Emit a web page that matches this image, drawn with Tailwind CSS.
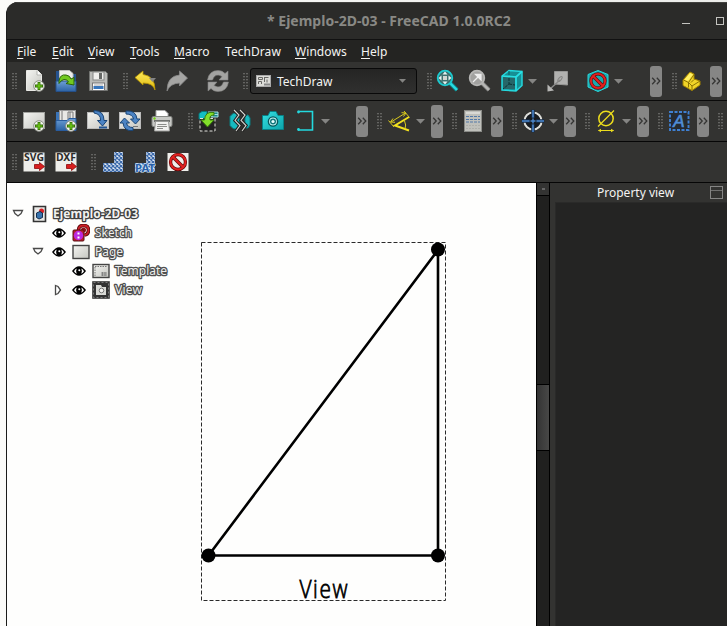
<!DOCTYPE html>
<html lang="en">
<head>
<meta charset="utf-8">
<title>Ejemplo-2D-03 - FreeCAD</title>
<script src="https://cdn.jsdelivr.net/npm/@tailwindcss/browser@4"></script>
</head>
<body class="w-[727px] h-[626px] overflow-hidden bg-gradient-to-r from-[#fbfbf9] to-[#ecedea] font-['Noto_Sans',sans-serif] text-[12px] text-[#f4f4f2]">
<svg width="0" height="0" class="absolute">
  <defs>
    <pattern id="dots" width="3" height="3" patternUnits="userSpaceOnUse"><rect width="2" height="1.300" fill="#646462"/></pattern>
    <pattern id="hatch" width="4" height="4" patternUnits="userSpaceOnUse"><rect width="4" height="4" fill="#e8eef6"/><path d="M0 0l4 4M4 0L0 4" stroke="#3d6bab" stroke-width="1.300"/></pattern>
    <linearGradient id="paper" x2="1" y2="1"><stop stop-color="#f4f4f1"/><stop offset="1" stop-color="#c5c6c1"/></linearGradient>
    <linearGradient id="blue" x2="0" y2="1"><stop stop-color="#6ea0d6"/><stop offset="1" stop-color="#2c62a4"/></linearGradient>
    <linearGradient id="cyan" x2="1" y2="1"><stop stop-color="#34e0e2"/><stop offset="1" stop-color="#0da3aa"/></linearGradient>
    <linearGradient id="gold" x2="0" y2="1"><stop stop-color="#fdec5c"/><stop offset="1" stop-color="#dfb80d"/></linearGradient>
    <symbol id="grip" viewBox="0 0 5 16"><rect width="5" height="16" fill="url(#dots)"/></symbol>
    <symbol id="drop" viewBox="0 0 9 5"><path d="M0 0h9L4.500 4.800z" fill="#858583"/></symbol>
    <symbol id="chev" viewBox="0 0 12 8"><path d="M2.200.8l3 3.200-3 3.200M6.800.8l3 3.200-3 3.200" fill="none" stroke="#353534" stroke-width="1.300"/></symbol>
    <symbol id="plus" viewBox="0 0 12 12"><circle cx="6" cy="6" r="5.300" fill="#f3f4ee" stroke="#8b8e86"/><path d="M6 2v8M2 6h8" stroke="#2f6a05" stroke-width="2.800"/><path d="M6 2.800v6.400M2.800 6h6.400" stroke="#77d51a" stroke-width="1.200"/></symbol>
    <symbol id="ban" viewBox="0 0 16 16"><circle cx="8" cy="8" r="6.300" fill="none" stroke="#5f0808" stroke-width="2.800"/><path d="M3.600 3.600l8.800 8.800" stroke="#5f0808" stroke-width="3"/><circle cx="8" cy="8" r="6.300" fill="none" stroke="#e2201f" stroke-width="1.700"/><path d="M3.600 3.600l8.800 8.800" stroke="#e2201f" stroke-width="1.800"/></symbol>
    <symbol id="export" viewBox="0 0 11 9"><path d="M.5 2.500h5V.5l5 4-5 4V6.500h-5z" fill="#d91e1e" stroke="#8b0a0a" stroke-width=".8"/></symbol>
    <symbol id="eye" viewBox="0 0 14 10"><path d="M0 5Q7-4.600 14 5 7 14.600 0 5z" fill="#000"/><path d="M2 5.200Q3 2.900 4.700 2.400 3.400 5 4.700 7.700 3 7 2 5.200zM12 5.200Q11 2.900 9.300 2.400 10.600 5 9.300 7.700 11 7 12 5.200z" fill="#fff"/><circle cx="7.300" cy="4.300" r="1" fill="#fff"/></symbol>
  </defs>
</svg>

<div class="ml-[6px] mt-[2px] w-[721px] h-[624px] flex flex-col overflow-hidden rounded-tl-[12px] border-l border-[#1b1b1a] bg-[#333331]">
  <!-- Title bar -->
  <header class="h-[37px] shrink-0 flex items-center bg-[#2b2b29] border-t border-[#42423f]">
    <h1 class="ml-[260px] w-[246px] whitespace-nowrap font-bold text-[14px] text-[#898985] tracking-[0.02px] pb-px">* Ejemplo-2D-03 - FreeCAD 1.0.0RC2</h1>
    <span class="ml-[169px] mt-[4px] w-[8px] h-px bg-[#c4c4c0]"></span>
    <span class="ml-[26px] w-[8px] h-[8px] shrink-0 border border-[#c4c4c0]"></span>
  </header>

  <!-- Menu bar -->
  <nav class="h-[23px] shrink-0 flex items-center bg-[#242422] border-t border-[#111] pl-[10px] pt-[2px] leading-[20px] tracking-[0.005em] [&_u]:underline-offset-2">
    <span class="w-[35px]"><u>F</u>ile</span><span class="w-[36px]"><u>E</u>dit</span><span class="w-[42px]"><u>V</u>iew</span><span class="w-[44px]"><u>T</u>ools</span><span class="w-[51px]"><u>M</u>acro</span><span class="w-[70px]">TechDraw</span><span class="w-[66px]"><u>W</u>indows</span><span><u>H</u>elp</span>
  </nav>

  <!-- Toolbar: file, workbench, view -->
  <div class="h-[39px] shrink-0 flex items-center border-b border-[#0a0a0a] pl-[5px] [&>*]:shrink-0">
    <svg class="w-[5px] h-[16px]"><use href="#grip"/></svg>
    <svg class="ml-[6px]" width="24" height="24"><path d="M3.500 1.500h11l4 4v16h-15z" fill="url(#paper)" stroke="#e9e9e5"/><path d="M14 1.500v4.500h4.500" fill="#fff" stroke="#b5b6b2"/><use href="#plus" x="10" y="11" width="12" height="12"/></svg>
    <svg class="ml-[7px]" width="24" height="24"><path d="M2 2h6v10H2zM18 5h4v8h-4z" fill="#25528d"/><path d="M5.500 1.500h10l3.500 3v9H5.500z" fill="#eeeeeb" stroke="#bfc0bd"/><path d="M2 12h20v10.500H2z" fill="url(#blue)" stroke="#244f89"/><path d="M5 12Q6 5 12 6q4 .5 5 4l3-1.500v7.500l-8-1.500 2.500-1.500Q13 10 10 10.500q-3 .5-5 4z" fill="#72ca20" stroke="#2c6506"/></svg>
    <svg class="ml-[8px]" width="24" height="24"><path d="M3.500 2.500h16l2 2v17h-18z" fill="#babbb8" stroke="#747673"/><rect x="7" y="3" width="11" height="8" fill="#efefed" stroke="#858785"/><rect x="13" y="4" width="3" height="6" fill="#656765"/><rect x="6.500" y="14" width="12" height="7.500" fill="#fff" stroke="#777"/><path d="M7.500 18.500h10" stroke="#3776bd" stroke-width="3"/><path d="M8 16h9" stroke="#aaa"/></svg>
    <svg class="ml-[13px] w-[5px] h-[16px]"><use href="#grip"/></svg>
    <svg class="ml-[5px]" width="24" height="24"><path d="M2 8.500l8-6.500v3.500Q22 7 22 21q-2-7-12-7v2z" fill="url(#gold)" stroke="#b79500" stroke-width=".8"/><path d="M16 9h7l-3.500 4z" fill="#858583"/></svg>
    <svg class="ml-[8px]" width="24" height="24"><path d="M22.500 9l-8-7v4Q2 7 2 22q3-7.500 12.500-8v3z" fill="#a5a5a3" stroke="#888" stroke-width=".8"/></svg>
    <svg class="ml-[17px]" width="24" height="24"><path d="M1.500 11Q3 1.500 12 1.500q4.500 0 7 3L22 2v9h-9l3-3.500Q9 3.500 6.500 11zM22.500 13Q21 22.500 12 22.500q-4.500 0-7-3L2 22v-9h9l-3 3.500q7 4 9.500-3.500z" fill="#a3a3a1" stroke="#858583" stroke-width=".6"/></svg>
    <svg class="ml-[13px] w-[5px] h-[16px]"><use href="#grip"/></svg>
    <div class="ml-[2px] w-[167px] h-[26px] flex items-center rounded-[3px] border border-[#090909] bg-gradient-to-b from-[#252524] to-[#30302f] text-[12px]">
      <svg class="ml-[5px]" width="15" height="13"><rect x=".5" y=".5" width="14" height="11" fill="#dcdcd8" stroke="#aaa"/><path d="M2.500 2.500h4v2h-4zM2.500 9V6.500h3V9M8.500 2.500h4M8.500 2v5M11 4.500v3" fill="none" stroke="#696966"/><path d="M8 9.500h6" stroke="#888" stroke-width="2"/></svg>
      <span class="ml-[6px] w-[122px] pt-px">TechDraw</span>
      <svg class="w-[7px] h-[4px]" viewBox="0 0 9 5"><use href="#drop"/></svg>
    </div>
    <svg class="ml-[10px] w-[5px] h-[16px]"><use href="#grip"/></svg>
    <svg class="ml-[4px]" width="24" height="24"><path d="M14 14l7 7" stroke="#0a898f" stroke-width="4"/><path d="M14 14l7 7" stroke="#29dce0" stroke-width="2.400"/><circle cx="9" cy="9" r="7.300" fill="#3d706f" stroke="#1bcbd0" stroke-width="1.800"/><path d="M9 2.500l2.500 3h-5zM9 15.500l2.500-3h-5zM2.500 9l3-2.500v5zM15.500 9l-3-2.500v5z" fill="#e6f4f2"/><rect x="7" y="7" width="4" height="4" fill="#d0d5d1"/></svg>
    <svg class="ml-[8px]" width="24" height="24"><path d="M14 14l7 7" stroke="#878785" stroke-width="4"/><path d="M14 14l7 7" stroke="#b7b7b5" stroke-width="2.400"/><circle cx="9" cy="9" r="7.300" fill="#a2a2a0" stroke="#b7b7b5" stroke-width="1.800"/><path d="M5 13l6-6M7.500 5.500H13V11z" fill="#eee" stroke="#eee" stroke-width="1.300"/></svg>
    <svg class="ml-[8px]" width="24" height="24"><path d="M2 7l7-5.500 13 1v14l-6 5.500-14-1z" fill="#178f94" stroke="#25d7dc" stroke-width="1.500"/><path d="M3 8h12v12H3z" fill="#266668"/><path d="M2 7l14 1v14M16 8l6-5.500" fill="none" stroke="#28e0e4" stroke-width="1.700"/><path d="M9 9v6l-6 5M9 15l6 1" fill="none" stroke="#0a3436" stroke-dasharray="3 1"/><path d="M9 2v4" stroke="#0a5c60"/></svg>
    <svg class="ml-[4px] w-[9px] h-[5px]"><use href="#drop"/></svg>
    <svg class="ml-[9px]" width="24" height="24"><path d="M8.500 2.500h13v13.500l-13-1z" fill="#b1b1af" stroke="#979795"/><path d="M4 20l10-9" stroke="#8b8b89" stroke-width="1.500"/><path d="M1.500 22.500v-7l6.500 6z" fill="#b7b7b5"/><ellipse cx="14" cy="10" rx="3" ry="1.300" transform="rotate(-50 14 10)" fill="none" stroke="#858583"/></svg>
    <svg class="ml-[16px]" width="24" height="24"><path d="M12 1.500l10 4v12.500l-10 4.500-10-4.500V5.500z" fill="#1aa9ae" stroke="#28d9de"/><use href="#ban" x="3" y="3" width="18" height="18"/></svg>
    <svg class="ml-[4px] w-[9px] h-[5px]"><use href="#drop"/></svg>
    <div class="ml-[27px] w-[12px] h-[31px] flex items-center rounded-[3px] bg-[#868685]"><svg class="w-[12px] h-[8px]"><use href="#chev"/></svg></div>
    <svg class="ml-[10px] w-[5px] h-[16px]"><use href="#grip"/></svg>
    <svg class="ml-[3px]" width="24" height="24"><path d="M3 11l7-8 4 2v5l6 2v4L12 21.500l-9-5z" fill="#f0d428" stroke="#a28200"/><path d="M3.500 11l5 2.500v5M8.500 13.500L14 5.500M12 21v-4M12 17l8-5M8.500 13.500L12 17M11 13.500l3-3" fill="none" stroke="#806900" stroke-width=".9"/><path d="M4.500 10.500L10 4l3 1.500-5 6.500z" fill="#fff066"/></svg>
    <div class="ml-[6px] w-[12px] h-[31px] flex items-center rounded-[3px] bg-[#868685]"><svg class="w-[12px] h-[8px]"><use href="#chev"/></svg></div>
  </div>

  <!-- Toolbar: TechDraw pages, views, dimensions -->
  <div class="h-[41px] shrink-0 flex items-center border-b border-[#060606] pl-[5px] [&>*]:shrink-0">
    <svg class="w-[5px] h-[16px]"><use href="#grip"/></svg>
    <svg class="ml-[5px]" width="24" height="24"><rect x="1.500" y="3.500" width="21" height="16" fill="url(#paper)" stroke="#a2a39f"/><use href="#plus" x="11" y="11" width="12" height="12"/></svg>
    <svg class="ml-[8px]" width="24" height="24"><path d="M2 3h3v8H2z" fill="#3a73b7"/><rect x="5.500" y="1.500" width="16" height="13" fill="#e9e9e6" stroke="#999"/><path d="M8 2v9M14 3h5v7h-5zM16 3v7" fill="none" stroke="#777"/><path d="M2 11.500h11l2-2h7v12H2z" fill="url(#blue)" stroke="#295c9e"/><use href="#plus" x="11" y="11" width="12" height="12"/></svg>
    <svg class="ml-[8px]" width="24" height="24"><rect x="1.500" y="3.500" width="21" height="16" fill="url(#paper)" stroke="#bbb"/><path d="M8 1.500q10 0 10 10h3l-4.500 5.500-5-5.500h3Q15 5 8 4z" fill="#4b83c4" stroke="#194475"/><path d="M13 18.500h8" stroke="#235694" stroke-width="2"/></svg>
    <svg class="ml-[8px]" width="24" height="24"><rect x="1.500" y="3.500" width="21" height="16" fill="url(#paper)" stroke="#bbb"/><path d="M8 2q10-1 11 8h3l-4.500 5-5-5h3q-1-5-7.500-5zM15 21.500q-9 1-10-7.500H2l4.500-5 5 5h-3q1 4.500 6.500 4.500z" fill="#4b83c4" stroke="#194475"/><path d="M15 17.500h5" stroke="#777"/></svg>
    <svg class="ml-[8px]" width="24" height="24"><path d="M6 1.500h9l3 3V10H6z" fill="#fff" stroke="#aaa"/><rect x="2" y="7.500" width="20" height="10" rx="1.500" fill="#c8c9c6" stroke="#888a87"/><rect x="4" y="11" width="16" height="2" fill="#70726f"/><circle cx="4.500" cy="9.500" r="1.200" fill="#73d216"/><path d="M5.500 12.500h13l1 9.500h-15z" fill="#f1f1ef" stroke="#9a9b98"/><path d="M7.500 15.500h9M7 17.500h10M7 19.500h6" stroke="#8b8c89"/></svg>
    <svg class="ml-[14px] w-[5px] h-[16px]"><use href="#grip"/></svg>
    <svg class="ml-[3px]" width="24" height="24"><path d="M3 4.500l3-2h5v5l-3 2.500H3z" fill="#13bec3" stroke="#0a777b"/><path d="M12 3h10v5h-7M16 3v5M12 5.500h10" fill="#1b8588" stroke="#a9dfde"/><rect x="4" y="9.500" width="15" height="12.500" fill="#222" stroke="#e4e4df" stroke-dasharray="3 2"/><path d="M18 3.500Q9 2 8.500 11H5l6.500 7 6.500-7h-4Q13 6 18 6z" fill="#83df2b" stroke="#397c0b"/></svg>
    <svg class="ml-[8px]" width="24" height="24"><path d="M5 4.500l4-1 3 8.500-3 8.500-4-1-3-3v-9zM17 6h3l2 3v7l-2 3h-3z" fill="#18bac0" stroke="#0a7e83"/><path d="M6 1l5 5-4 5.500 5 5-4 5.500M12 1l5 5-4 5.500 5 5-4 5.500" fill="none" stroke="#222" stroke-width="3.200"/><path d="M6 1l5 5-4 5.500 5 5-4 5.500M12 1l5 5-4 5.500 5 5-4 5.500" fill="none" stroke="#d5d5d1" stroke-width="1.100"/></svg>
    <svg class="ml-[9px]" width="24" height="24"><path d="M1.500 6.500H7l2-4h6l2 4h5.500v14h-21z" fill="url(#cyan)" stroke="#078187"/><circle cx="12" cy="12.500" r="4.600" fill="#c8f7f7" stroke="#075a5e" stroke-width="1.400"/><circle cx="12" cy="12.500" r="3" fill="#12777c"/><circle cx="12" cy="12.500" r="1.600" fill="#e8ffff"/></svg>
    <svg class="ml-[9px]" width="24" height="24"><path d="M4 2.500h14.500v18.500H4" fill="none" stroke="#23d9df" stroke-width="1.600"/><circle cx="4.500" cy="3" r="1.400" fill="#23d9df"/><circle cx="4.500" cy="20.500" r="1.400" fill="#23d9df"/></svg>
    <svg class="ml-[3px] w-[9px] h-[5px]"><use href="#drop"/></svg>
    <div class="ml-[26px] w-[12px] h-[31px] flex items-center rounded-[3px] bg-[#868685]"><svg class="w-[12px] h-[8px]"><use href="#chev"/></svg></div>
    <svg class="ml-[9px] w-[5px] h-[16px]"><use href="#grip"/></svg>
    <svg class="ml-[5px]" width="24" height="24"><path d="M22 8L8 16.500l14 5" fill="none" stroke="#f2e11f" stroke-width="2"/><path d="M1.500 11.500l5.500 6.500M17 2l5.500 6.500M4 13L18.500 4M6 9.500l-2.500 3.500 4.500.3M14.500 3.700l4.500.3-2.500 3.500" fill="none" stroke="#d9c91d" stroke-width="1"/><path d="M17.500 12q2 4 .5 8" fill="none" stroke="#d9c91d"/></svg>
    <svg class="ml-[5px] w-[9px] h-[5px]"><use href="#drop"/></svg>
    <div class="ml-[6px] w-[12px] h-[33px] flex items-center rounded-[3px] bg-[#868685]"><svg class="w-[12px] h-[8px]"><use href="#chev"/></svg></div>
    <svg class="ml-[9px] w-[5px] h-[16px]"><use href="#grip"/></svg>
    <svg class="ml-[4px]" width="24" height="24"><rect x="3.500" y="1.500" width="17" height="21" fill="#bfc0bb" stroke="#8a8b87"/><path d="M5 4h14" stroke="#d8d9d5" stroke-width="2"/><path d="M5 7.500h14M5 10.500h14M5 13h14" stroke="#5279a8" stroke-dasharray="3 1"/><path d="M5 16.500h14M5 19.500h14" stroke="#adaea9" stroke-dasharray="2 1"/></svg>
    <div class="ml-[6px] w-[12px] h-[31px] flex items-center rounded-[3px] bg-[#868685]"><svg class="w-[12px] h-[8px]"><use href="#chev"/></svg></div>
    <svg class="ml-[9px] w-[5px] h-[16px]"><use href="#grip"/></svg>
    <svg class="ml-[4px]" width="24" height="24"><circle cx="12" cy="12" r="8.600" fill="#171b20" stroke="#dddeda" stroke-width="2"/><path d="M12 .8V9M12 15v8.200M.8 12H9M15 12h8.200" stroke="#172d48" stroke-width="3.500"/><path d="M12 1v7.500M12 15.500V23M1 12h7.500M15.500 12H23" stroke="#4c89d0" stroke-width="1.500"/><path d="M12 9.500v5M9.500 12h5" stroke="#4c89d0" stroke-width="1.400"/></svg>
    <svg class="ml-[4px] w-[9px] h-[5px]"><use href="#drop"/></svg>
    <div class="ml-[6px] w-[12px] h-[31px] flex items-center rounded-[3px] bg-[#868685]"><svg class="w-[12px] h-[8px]"><use href="#chev"/></svg></div>
    <svg class="ml-[9px] w-[5px] h-[16px]"><use href="#grip"/></svg>
    <svg class="ml-[4px]" width="24" height="24"><circle cx="12" cy="9.500" r="7.200" fill="none" stroke="#eddd1d" stroke-width="1.500"/><path d="M4 17.500L20 1.500M4.500 21.500h15" stroke="#eddd1d" stroke-width="1.200"/><path d="M4 21.500l3-1.700v3.400zM20 21.500l-3-1.700v3.400z" fill="#eddd1d"/></svg>
    <svg class="ml-[4px] w-[9px] h-[5px]"><use href="#drop"/></svg>
    <div class="ml-[6px] w-[12px] h-[31px] flex items-center rounded-[3px] bg-[#868685]"><svg class="w-[12px] h-[8px]"><use href="#chev"/></svg></div>
    <svg class="ml-[9px] w-[5px] h-[16px]"><use href="#grip"/></svg>
    <svg class="ml-[4px]" width="24" height="24"><rect x="3" y="3" width="18.500" height="18" fill="#252a30" stroke="#3f80d2" stroke-width="1.900" stroke-dasharray="3 1.500"/><text x="12" y="18" text-anchor="middle" font-family="Liberation Sans" font-style="italic" font-size="17" fill="#5793db" stroke="#4a88d4" stroke-width=".7">A</text></svg>
    <div class="ml-[6px] w-[12px] h-[31px] flex items-center rounded-[3px] bg-[#868685]"><svg class="w-[12px] h-[8px]"><use href="#chev"/></svg></div>
    <svg class="ml-[9px] w-[5px] h-[16px]"><use href="#grip"/></svg>
  </div>

  <!-- Toolbar: export and hatching -->
  <div class="h-[41px] shrink-0 flex items-center border-b border-[#060606] pl-[5px] [&>*]:shrink-0">
    <svg class="w-[5px] h-[16px]"><use href="#grip"/></svg>
    <svg class="ml-[5px]" width="24" height="24"><rect x="1.500" y="2.500" width="21" height="19" fill="#eeeeea"/><text x="12" y="11" text-anchor="middle" textLength="20" lengthAdjust="spacingAndGlyphs" font-family="Noto Sans" font-weight="700" font-size="10.500" fill="#2c2c2b">SVG</text><use href="#export" x="12" y="12" width="11" height="9"/></svg>
    <svg class="ml-[8px]" width="24" height="24"><rect x="1.500" y="2.500" width="21" height="19" fill="#eeeeea"/><text x="12" y="11" text-anchor="middle" textLength="20" lengthAdjust="spacingAndGlyphs" font-family="Noto Sans" font-weight="700" font-size="10.500" fill="#2c2c2b">DXF</text><use href="#export" x="12" y="12" width="11" height="9"/></svg>
    <svg class="ml-[13px] w-[5px] h-[16px]"><use href="#grip"/></svg>
    <svg class="ml-[5px]" width="24" height="24"><path d="M13 2h9v20H2v-9h11z" fill="url(#hatch)"/></svg>
    <svg class="ml-[8px]" width="24" height="24"><path d="M13 2h9v20H2v-9h11z" fill="url(#hatch)"/><text x="12" y="21.500" text-anchor="middle" textLength="20" lengthAdjust="spacingAndGlyphs" font-family="Noto Sans" font-weight="700" font-size="10.500" fill="#2860a8" stroke="#dbe8f6" stroke-width="1.200" paint-order="stroke">PAT</text></svg>
    <svg class="ml-[9px]" width="24" height="24"><rect x="1.500" y="3" width="21" height="18" fill="#efefeb"/><use href="#ban" x="2.500" y="2.500" width="19" height="19"/></svg>
  </div>

  <!-- Work area -->
  <main class="flex-1 min-h-0 flex">
    <div class="w-[529px] shrink-0 flex bg-[#fefefd] overflow-hidden">
      <ul class="w-[190px] shrink-0 pt-[21px] text-[12px] leading-[19px] [&>li]:h-[19px] [&>li]:flex [&>li]:items-center [&_svg]:shrink-0 [&_text]:[paint-order:stroke]">
        <li class="pl-[5px]"><svg width="12" height="9"><path d="M1.500 1.500h9L9 4.500 6 7 3 4.500z" fill="#fff" stroke="#4a4a49" stroke-width="1.300"/></svg>
          <svg class="ml-[8px]" width="15" height="18"><path d="M1.500 1.500h12v15h-12z" fill="#e9e9e6" stroke="#333" stroke-width="1.600"/><circle cx="9.500" cy="6" r="2.500" fill="#d91e23"/><path d="M4.500 8l3.500-1.500 2.500 1.500v4.500L7 14l-2.500-1.500z" fill="#3973ad" stroke="#122e50"/></svg>
          <svg class="ml-[4px] overflow-visible" width="100" height="19"><text x="2" y="14" textLength="85" font-weight="700" font-size="12" fill="#f1f1ef" stroke="#414140" stroke-width="2.600" stroke-linejoin="round">Ejemplo-2D-03</text></svg></li>
        <li class="pl-[45px]"><svg class="w-[14px] h-[10px]"><use href="#eye"/></svg>
          <svg class="ml-[6px]" width="18" height="18"><path d="M6.500 6q0-4.500 5-4.500t5 4.500-4 5" fill="none" stroke="#5c080c" stroke-width="3.600"/><path d="M6.500 6q0-4.500 5-4.500t5 4.500-4 5" fill="none" stroke="#cb2028" stroke-width="1.800"/><circle cx="11.500" cy="6" r="2.500" fill="#8f1219"/><rect x="1" y="6" width="11" height="11" rx="1" fill="#b91f2b" stroke="#5a1115"/><circle cx="6.500" cy="11.500" r="4.700" fill="#bd27e0"/><path d="M6.500 8.500v2M6.500 12.500v2" stroke="#fff" stroke-width="2"/></svg>
          <svg class="ml-[3px] overflow-visible" width="60" height="19"><text x="2" y="14" font-size="12" textLength="37" fill="#eeeeed" stroke="#50504f" stroke-width="2.600" stroke-linejoin="round">Sketch</text></svg></li>
        <li class="pl-[25px]"><svg width="12" height="9"><path d="M1.500 1.500h9L9 4.500 6 7 3 4.500z" fill="#fff" stroke="#4a4a49" stroke-width="1.300"/></svg>
          <svg class="ml-[8px] w-[14px] h-[10px]"><use href="#eye"/></svg>
          <svg class="ml-[6px]" width="18" height="16"><rect x="1" y="1.500" width="16" height="13" fill="url(#paper)" stroke="#444" stroke-width="1.400"/></svg>
          <svg class="ml-[3px] overflow-visible" width="60" height="19"><text x="2" y="14" font-size="12" textLength="28" fill="#eeeeed" stroke="#50504f" stroke-width="2.600" stroke-linejoin="round">Page</text></svg></li>
        <li class="pl-[65px]"><svg class="w-[14px] h-[10px]"><use href="#eye"/></svg>
          <svg class="ml-[6px]" width="18" height="16"><rect x="1" y="1.500" width="16" height="13" fill="url(#paper)" stroke="#444" stroke-width="1.400"/><path d="M3 3.500h12M3 4v9" stroke="#777" stroke-dasharray="1.500 1"/><path d="M9 10h6M9 12h6M10.500 9v4M13 9v4" stroke="#777" stroke-width=".8"/></svg>
          <svg class="ml-[3px] overflow-visible" width="70" height="19"><text x="2" y="14" font-size="12" textLength="52" fill="#eeeeed" stroke="#50504f" stroke-width="2.600" stroke-linejoin="round">Template</text></svg></li>
        <li class="pl-[47px]"><svg width="8" height="12"><path d="M1.500 1.500l2.500 1L6.500 6 4 9.500l-2.500 1z" fill="#fff" stroke="#4a4a49" stroke-width="1.300"/></svg>
          <svg class="ml-[10px] w-[14px] h-[10px]"><use href="#eye"/></svg>
          <svg class="ml-[6px]" width="18" height="18"><rect x="1" y="1" width="16" height="16" fill="#333" stroke="#333" stroke-width="1.600"/><rect x="1.500" y="1.500" width="15" height="15" fill="none" stroke="#aaa" stroke-dasharray="2 2" stroke-width=".6"/><path d="M4 4h5l1 2h4v8H4z" fill="#d9dad6"/><circle cx="9.500" cy="9.500" r="2.300" fill="#f3f3f0" stroke="#777"/></svg>
          <svg class="ml-[3px] overflow-visible" width="60" height="19"><text x="2" y="14" font-size="12" textLength="27" fill="#eeeeed" stroke="#50504f" stroke-width="2.600" stroke-linejoin="round">View</text></svg></li>
      </ul>
      <svg class="shrink-0" width="339" height="443" viewBox="197 183 339 443">
        <path d="M201.500 242.500h244v358h-244z" fill="none" stroke="#2a2a2a" stroke-dasharray="4 2"/>
        <path d="M208.500 555.500L438 250v305.500z" fill="none" stroke="#000" stroke-width="2.600"/>
        <circle cx="208.500" cy="555.500" r="7"/><circle cx="438" cy="249.500" r="7"/><circle cx="438" cy="555.500" r="7"/>
        <g transform="translate(299.500 598) scale(.8 1)" font-family="Open Sans" font-size="26" font-weight="300" fill="#000" stroke="#000" stroke-width=".8"><text textLength="60" lengthAdjust="spacing">View</text></g>
      </svg>
    </div>
    <div class="w-[14px] shrink-0 flex flex-col border-x border-black bg-[#20201f]">
      <div class="h-[13px] flex items-center justify-center border-b border-black bg-[#333332]"><span class="w-[3px] h-[2px] bg-[#666]"></span></div>
      <div class="mt-[188px] h-[67px] border-y border-black bg-gradient-to-r from-[#343434] to-[#484847]"></div>
    </div>
    <aside class="w-[177px] shrink-0 flex flex-col pl-[5px]">
      <div class="h-[19px] shrink-0 flex items-center">
        <span class="ml-[42px] w-[77px] text-center whitespace-nowrap leading-[18px]">Property view</span>
        <span class="ml-[36px] w-[13px] h-[13px] border border-[#858584] pt-[3px]"><span class="block h-px bg-[#70706f]"></span></span>
      </div>
      <div class="flex-1 border-l border-t border-[#2a2a29] bg-[#242423]"></div>
    </aside>
  </main>
</div>
</body>
</html>
